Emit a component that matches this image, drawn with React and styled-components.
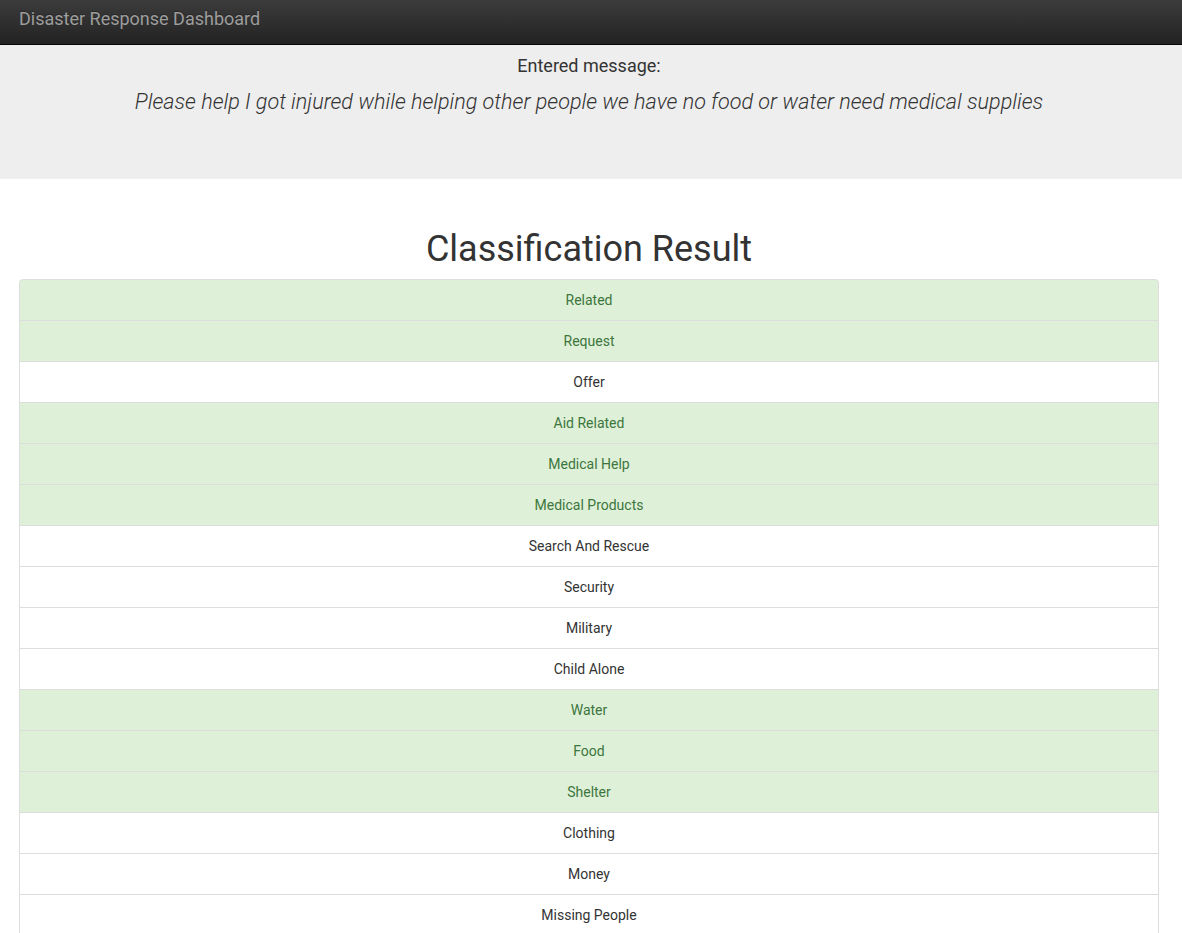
import React from 'react';
import styled, { createGlobalStyle } from 'styled-components';

const categories = [
    ['Related', true],
    ['Request', true],
    ['Offer', false],
    ['Aid Related', true],
    ['Medical Help', true],
    ['Medical Products', true],
    ['Search And Rescue', false],
    ['Security', false],
    ['Military', false],
    ['Child Alone', false],
    ['Water', true],
    ['Food', true],
    ['Shelter', true],
    ['Clothing', false],
    ['Money', false],
    ['Missing People', false],
];

const GlobalStyle = createGlobalStyle`
    html, body {
        margin: 0;
        padding: 0;
        background: #fff;
        font-family: Roboto, "Helvetica Neue", Arial, sans-serif;
        font-size: 14px;
        line-height: 1.42857;
        color: #333;
    }
    * {
        box-sizing: border-box;
    }
`;

const Navbar = styled.nav`
    height: 45px;
    background: linear-gradient(to bottom, #3c3c3c 0%, #222 100%);
    border-bottom: 1px solid #080808;
    padding: 0 19px;
    display: flex;
    align-items: center;
`;

const Brand = styled.a`
    color: #9d9d9d;
    font-size: 18px;
    line-height: 20px;
    text-decoration: none;
    margin-top: -7px;
    text-shadow: 0 -1px 0 rgba(0, 0, 0, 0.25);
`;

const Jumbotron = styled.div`
    background: #eee;
    height: 134px;
    padding: 9px 23px 0 19px;
    text-align: center;
`;

const Label = styled.div`
    font-size: 18px;
    line-height: 24px;
    color: #333;
`;

const Message = styled.p`
    margin: 9px 0 0;
    font-size: 21.6px;
    line-height: 30px;
    font-weight: 300;
    font-style: italic;
    color: #333;
`;

const Container = styled.div`
    padding: 0 23px 0 19px;
`;

const Title = styled.h1`
    margin: 48px 0 8px;
    font-size: 36px;
    line-height: 44px;
    font-weight: 400;
    text-align: center;
    color: #333;
`;

const List = styled.ul`
    margin: 0;
    padding: 0;
    list-style: none;
`;

const Item = styled.li`
    position: relative;
    padding: 10px 15px;
    line-height: 20px;
    text-align: center;
    border: 1px solid #ddd;
    margin-bottom: -1px;
    background: ${p => (p.$active ? '#dff0d8' : '#fff')};
    color: ${p => (p.$active ? '#3c763d' : '#333')};

    &:first-child {
        border-top-left-radius: 4px;
        border-top-right-radius: 4px;
    }
`;

const App = () => (
    <>
        <GlobalStyle />
        <Navbar>
            <Brand href="#">Disaster Response Dashboard</Brand>
        </Navbar>
        <Jumbotron>
            <Label>Entered message:</Label>
            <Message>
                Please help I got injured while helping other people we have no food or water need medical supplies
            </Message>
        </Jumbotron>
        <Container>
            <Title>Classification Result</Title>
            <List>
                {categories.map(([name, active]) => (
                    <Item key={name} $active={active}>
                        {name}
                    </Item>
                ))}
            </List>
        </Container>
    </>
);

export default App;
